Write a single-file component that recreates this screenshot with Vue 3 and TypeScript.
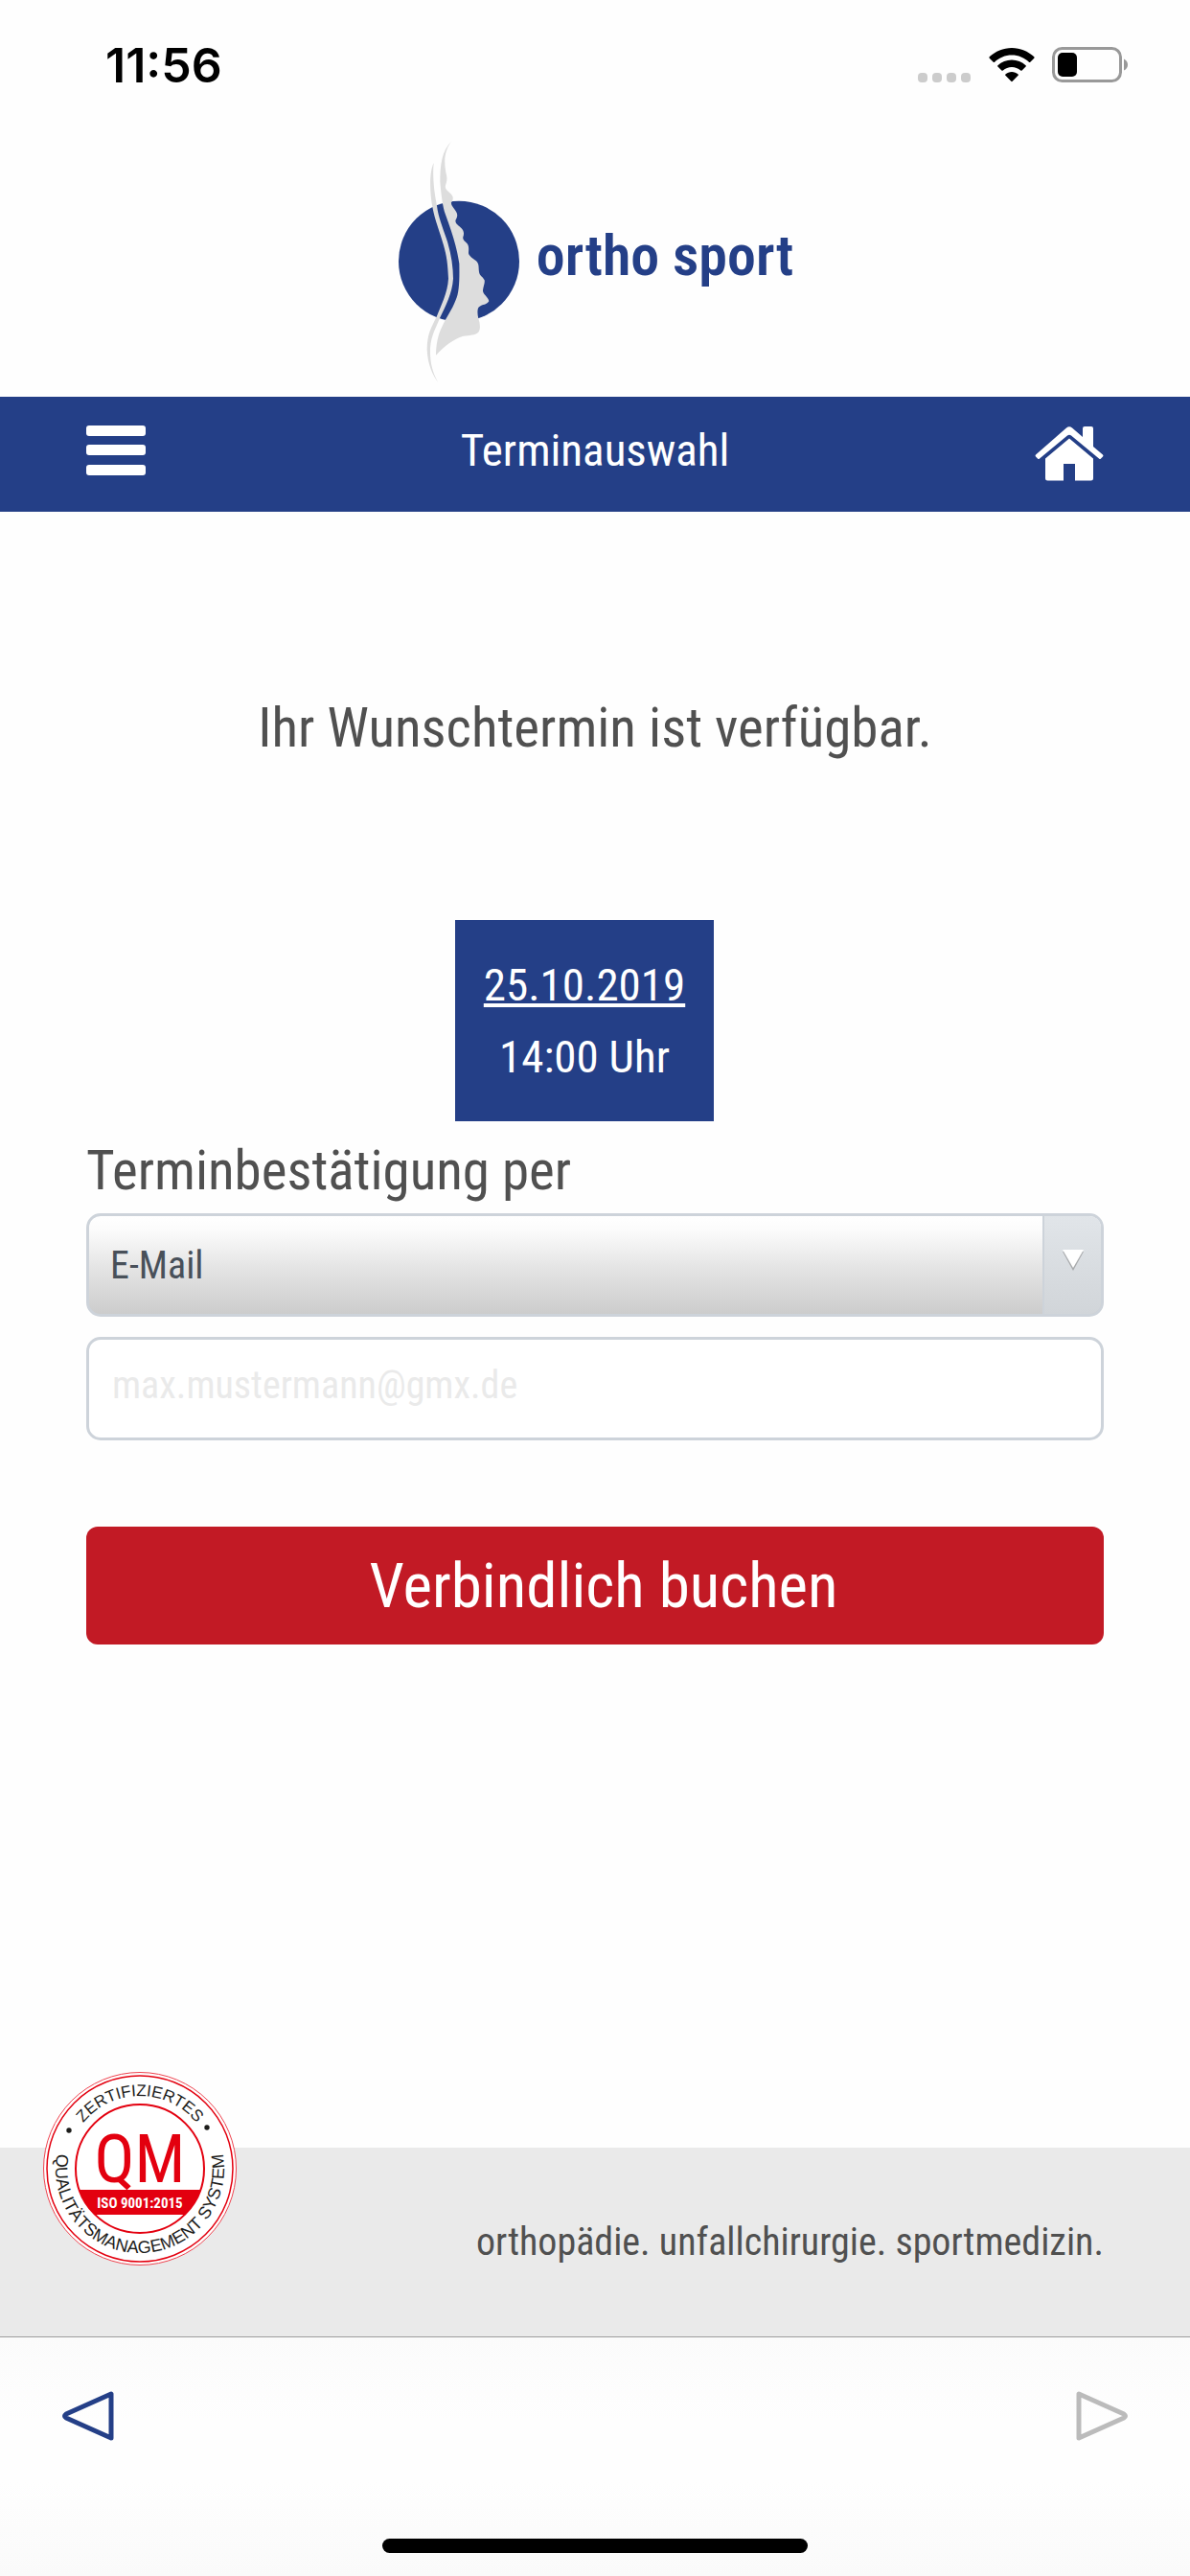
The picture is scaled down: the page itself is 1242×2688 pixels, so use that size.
<script setup lang="ts">
import { ref } from 'vue'

const channels = ['E-Mail', 'SMS']
const channel = ref('E-Mail')
const address = ref('')
</script>

<template>
  <div class="screen">
    <div class="status">
      <time class="clock">11:56</time>
      <div class="indicators">
        <svg class="signal" width="56" height="10" viewBox="0 0 56 10" aria-hidden="true">
          <rect x="0" width="10" height="10" rx="4" />
          <rect x="15" width="10" height="10" rx="4" />
          <rect x="30" width="10" height="10" rx="4" />
          <rect x="45" width="10" height="10" rx="4" />
        </svg>
        <svg class="wifi" width="48" height="36" viewBox="0 0 48 36" aria-hidden="true">
          <path d="M24 0C33 0 41 3.500 47.300 9.300Q48 10 47.300 10.700L43.300 14.700Q42.600 15.400 41.900 14.700C37 10.200 31 7.500 24 7.500S11 10.200 6.100 14.700Q5.400 15.400 4.700 14.700L.7 10.700Q0 10 .7 9.300C7 3.500 15 0 24 0Z" />
          <path d="M24 12.500C29.600 12.500 34.600 14.600 38.600 18.200Q39.300 18.900 38.600 19.600L34.600 23.500Q33.900 24.200 33.200 23.500C30.600 21.300 27.500 20 24 20S17.400 21.300 14.800 23.500Q14.100 24.200 13.400 23.500L9.400 19.600Q8.700 18.900 9.400 18.200C13.400 14.600 18.400 12.500 24 12.500Z" />
          <path d="M24 25C26.500 25 28.800 25.900 30.600 27.400Q31.300 28.100 30.600 28.800L24.700 34.800Q24 35.500 23.300 34.800L17.400 28.800Q16.700 28.100 17.400 27.400C19.200 25.900 21.500 25 24 25Z" />
        </svg>
        <svg class="battery" width="80" height="37" viewBox="0 0 80 37" aria-hidden="true">
          <rect x="1.500" y="1.500" width="70" height="34" rx="9" fill="none" stroke="#999" stroke-width="3" />
          <rect x="6" y="6" width="20" height="25" rx="5" />
          <path d="M75 12.500Q79 14.500 79 18.500T75 24.500Z" fill="#999" />
        </svg>
      </div>
    </div>

    <div class="brand">
      <svg class="emblem" width="130" height="260" viewBox="105 45 390 780" aria-hidden="true">
        <circle cx="300" cy="428" r="189" fill="#243f87" />
        <path fill="#ddd" d="M278 50C246 82 241 125 241 180C244 214 248 255 258 282C278 338 292 378 301 435C302 488 301 525 290 549C277 583 261 602 247 633C235 656 228 688 228 722C254 694 284 671 311 663C334 659 350 660 360 651C369 641 366 623 361 607C357 591 357 574 364 570C374 563 388 564 394 553C392 540 374 531 375 519C376 506 382 497 380 487C375 476 364 473 363 461C361 449 364 436 354 427C343 418 329 410 330 400C331 389 331 379 326 373C318 364 311 361 313 352C317 341 315 332 308 325C299 315 286 311 290 298C295 289 297 281 291 272C284 262 274 252 276 244C283 235 283 226 276 218C267 208 255 203 258 190C264 174 263 163 259 149C252 111 255 80 278 50Z" />
        <path fill="#ddd" d="M221 120C207 148 208 210 217 258C225 302 241 337 252 378C262 412 265 438 267 482C265 526 242 570 231 599C211 640 201 654 200 704C202 753 219 785 234 806C216 772 209 745 210 700C214 655 228 638 240 606C258 568 279 529 282 482C282 442 274 397 261 358C249 321 235 289 231 254C221 206 217 158 221 120Z" />
      </svg>
      <span class="wordmark">ortho sport</span>
    </div>

    <header class="bar">
      <button type="button" class="icon-button" aria-label="Menü">
        <svg width="62" height="52" viewBox="0 0 62 52" fill="#fff">
          <rect width="62" height="11" rx="3" />
          <rect y="20" width="62" height="11" rx="3" />
          <rect y="41" width="62" height="11" rx="3" />
        </svg>
      </button>
      <h1 class="title">Terminauswahl</h1>
      <a href="#start" class="icon-button home" aria-label="Startseite">
        <svg width="72" height="63" viewBox="0 -6 72 63" fill="#fff">
          <path d="M33 1.500Q36-1 39 1.500L50 11V2Q50 0 52 0H59Q61 0 61 2V21L71 29.500Q72 30.500 71 31.500L69 33.500Q68 34.500 67 33.500L38 9.500Q36 8 34 9.500L5 33.500Q4 34.500 3 33.500L1 31.500Q0 30.500 1 29.500Z" />
          <path d="M36 12.500L61 33.500V54Q61 56.500 58.500 56.500H42V39H30V56.500H13.500Q11 56.500 11 54V33.500Z" />
        </svg>
      </a>
    </header>

    <main class="content">
      <p class="notice">Ihr Wunschtermin ist verfügbar.</p>
      <div class="slot">
        <u>25.10.2019</u>
        <span>14:00 Uhr</span>
      </div>
      <form class="form" @submit.prevent>
        <label class="label" for="channel">Terminbestätigung per</label>
        <div class="select">
          <select id="channel" v-model="channel">
            <option v-for="item in channels" :key="item">{{ item }}</option>
          </select>
          <span class="arrow" aria-hidden="true">
            <svg width="22" height="22" viewBox="0 0 22 22">
              <path d="M0 2H22L11 22Z" fill="#a8aaac" />
              <path d="M0 0H22L11 19Z" fill="#fff" />
            </svg>
          </span>
        </div>
        <input v-model="address" class="address" type="email" placeholder="max.mustermann@gmx.de" aria-label="E-Mail-Adresse" />
        <button type="submit" class="submit">Verbindlich buchen</button>
      </form>
    </main>

    <footer class="footer">
      <svg class="seal" width="204" height="204" viewBox="-102 -102 204 204" role="img" aria-label="QM ISO 9001:2015">
        <defs>
          <path id="ring-top" d="M-76 0A76 76 0 0 1 76 0" />
          <path id="ring-bottom" d="M-83.700 -27.200A88 88 0 1 0 83.700 -27.200" />
          <clipPath id="disc"><circle r="67" /></clipPath>
        </defs>
        <circle r="100.500" fill="#fff" stroke="#ee4450" stroke-width="1" />
        <circle r="97" fill="none" stroke="#e3000f" stroke-width="1.500" />
        <rect x="-68" y="22" width="136" height="26" fill="#e3000f" clip-path="url(#disc)" />
        <circle r="67" fill="none" stroke="#e3000f" stroke-width="2" />
        <circle cx="-74" cy="-40" r="2.700" fill="#1d1d1b" />
        <circle cx="70" cy="-43" r="2.700" fill="#1d1d1b" />
        <text class="ring top"><textPath href="#ring-top" startOffset="50%">ZERTIFIZIERTES</textPath></text>
        <text class="ring bottom"><textPath href="#ring-bottom" startOffset="50%">QUALITÄTSMANAGEMENT SYSTEM</textPath></text>
        <text class="qm" x="0" y="14">QM</text>
        <text class="iso" x="0" y="41">ISO 9001:2015</text>
      </svg>
      <p class="claim">orthopädie. unfallchirurgie. sportmedizin.</p>
    </footer>

    <nav class="toolbar" aria-label="Verlauf">
      <div class="history">
        <button type="button" class="icon-button back" aria-label="Zurück">
          <svg width="54" height="52" viewBox="0 0 54 52">
            <path d="M51 3V49L4 28Q1 26 4 24Z" />
          </svg>
        </button>
        <button type="button" class="icon-button forward" aria-label="Vorwärts">
          <svg width="54" height="52" viewBox="0 0 54 52">
            <path d="M3 3V49L50 28Q53 26 50 24Z" />
          </svg>
        </button>
      </div>
      <div class="home-indicator"></div>
    </nav>
  </div>
</template>

<style>
body {
  margin: 0;
  background: #fff;
}
</style>

<style scoped>
.screen {
  display: flex;
  flex-direction: column;
  min-height: 100vh;
  background: #fefefe;
  color: #505050;
  font-family: "Ubuntu Condensed", "Roboto Condensed", Roboto, sans-serif;
}

.screen * {
  box-sizing: border-box;
}

.status {
  display: flex;
  align-items: center;
  justify-content: space-between;
  height: 135px;
  padding: 0 64px 0 110px;
  color: #000;
}

.clock {
  font: 600 50px/58px Inter, sans-serif;
}

.indicators {
  display: flex;
  align-items: flex-end;
  gap: 18px;
}

.signal {
  fill: #ccc;
}

.brand {
  display: flex;
  align-items: center;
  justify-content: center;
  gap: 16px;
  padding: 10px 0 9px;
}

.wordmark {
  padding-bottom: 16px;
  color: #243f87;
  font-size: 60px;
  font-weight: 600;
  line-height: 72px;
}

.bar {
  display: grid;
  grid-template-columns: 1fr auto 1fr;
  align-items: center;
  justify-items: start;
  height: 120px;
  padding: 0 90px 8px;
  background: #243f87;
}

.icon-button {
  display: block;
  padding: 0;
  border: 0;
  background: none;
}

.icon-button svg {
  display: block;
}

.home {
  justify-self: end;
}

.title {
  margin: 0;
  color: #fff;
  font-size: 47px;
  font-weight: 400;
  line-height: 60px;
}

.content {
  display: flex;
  flex: 1;
  flex-direction: column;
  padding: 190px 90px 0;
}

.notice {
  margin: 0;
  font-size: 57px;
  line-height: 72px;
  text-align: center;
}

.slot {
  display: flex;
  flex-direction: column;
  align-items: center;
  align-self: center;
  margin: 164px 22px 0 0;
  padding: 30px;
  background: #243f87;
  color: #fff;
  font-size: 47px;
  line-height: 75px;
}

.form {
  display: flex;
  flex-direction: column;
}

.label {
  margin: 16px 0 8px;
  font-size: 57px;
  line-height: 72px;
}

.select {
  display: flex;
  height: 108px;
  overflow: hidden;
  border: 3px solid #cdd3da;
  border-radius: 15px;
  background: linear-gradient(#fff, #fbfbfb 15%, #e6e6e6 50%, #ccc);
}

.select select {
  flex: 1;
  padding: 0 22px;
  border: 0;
  appearance: none;
  background: none;
  color: #485059;
  font: inherit;
  font-size: 40px;
}

.arrow {
  display: flex;
  align-items: center;
  justify-content: center;
  width: 61px;
  padding-bottom: 10px;
  border-left: 2px solid #cdd3da;
  background: linear-gradient(#e1e5e9, #d1d5d9);
}

.address {
  height: 108px;
  margin-top: 21px;
  padding: 0 24px 8px;
  border: 3px solid #cdd3da;
  border-radius: 15px;
  background: #fff;
  color: #485059;
  font: inherit;
  font-size: 40px;
}

.address::placeholder {
  color: #eaeaea;
  opacity: 1;
}

.submit {
  height: 123px;
  margin-top: 90px;
  padding: 0 0 0 18px;
  border: 0;
  border-radius: 12px;
  background: #c21a25;
  color: #fff;
  font: inherit;
  font-size: 65px;
}

.footer {
  position: relative;
  display: flex;
  align-items: center;
  justify-content: flex-end;
  height: 197px;
  padding: 0 90px;
  background: #eaeaea;
}

.seal {
  position: absolute;
  top: -80px;
  left: 44px;
}

.ring {
  fill: #1d1d1b;
  font-family: "Liberation Sans", sans-serif;
  text-anchor: middle;
}

.top {
  font-size: 17px;
}

.bottom {
  font-size: 18px;
}

.qm {
  fill: #e3000f;
  font-size: 70px;
  text-anchor: middle;
}

.iso {
  fill: #fff;
  font-size: 15px;
  font-weight: 700;
  text-anchor: middle;
}

.claim {
  margin: 0;
  font-size: 40px;
  line-height: 50px;
}

.toolbar {
  display: flex;
  flex-direction: column;
  align-items: center;
  justify-content: space-between;
  height: 250px;
  padding: 56px 65px 24px;
  border-top: 1px solid #9d9d9d;
  background: linear-gradient(#fbfbfb, #fefefe 35%, #fefefe 60%, #fafafa);
}

.history {
  display: flex;
  justify-content: space-between;
  width: 100%;
}

.history path {
  fill: none;
  stroke-linejoin: round;
  stroke-width: 5;
}

.back path {
  stroke: #243f87;
}

.forward path {
  stroke: #bbb;
}

.home-indicator {
  width: 40%;
  max-width: 444px;
  height: 15px;
  border-radius: 8px;
  background: #000;
}
</style>
